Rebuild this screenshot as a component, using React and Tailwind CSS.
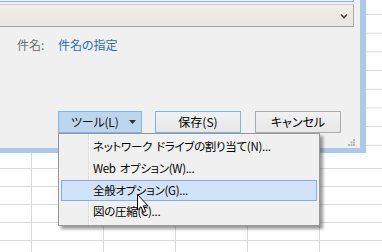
export default function App() {
  return (
    <div className="relative w-[382px] h-[252px] overflow-hidden bg-white text-[12px] leading-none text-black font-['Noto_Sans_CJK_JP',sans-serif] [font-feature-settings:'palt']">
      <div className="flex h-[153px]">
        <div className="w-[366px] h-full bg-[#abc9eb] pr-[6px] pb-[5px]">
          <div className="relative h-full bg-[#f0f0f0] flex flex-col">
            <div className="h-[2px] w-[354px] border-b border-r border-[#86b6e6]" />
            <div className="mt-[2px] h-[23px] w-[354px] border-t border-r border-b border-t-[#d6cdcb] border-r-[#acacac] border-b-[#a3a3a3] bg-[linear-gradient(#f2ede8,#e6e6e6)] flex items-center justify-end pr-[5px]">
              <svg width="8" height="6" viewBox="0 0 8 6">
                <path d="M1 1.5 L4 4.5 L7 1.5" fill="none" stroke="#444" strokeWidth="1.6" />
              </svg>
            </div>
            <div className="mt-[11px] flex items-center h-[14px] pl-[17px]">
              <span className="w-[41px] text-[#6d6d6d]">件名:</span>
              <span className="text-[#2a6cb9]">件名の指定</span>
            </div>
            <div className="mt-[59px] flex pl-[58px] h-[22px] whitespace-nowrap">
              <div className="w-[84px] h-[22px] border border-[#7eb4ea] bg-[#bcd6f0] flex items-center pl-[12px]">
                <span className="text-[#111] tracking-[-0.2px]">ツール(L)</span>
                <svg className="ml-auto mr-[5px]" width="7" height="4" viewBox="0 0 7 4">
                  <path d="M0 0 L7 0 L3.5 4 Z" fill="#333" />
                </svg>
              </div>
              <div className="ml-[13px] w-[86px] h-[22px] border border-[#7eb4ea] bg-[linear-gradient(#f2f2f2,#e6e6e6)] flex items-center justify-center">
                保存(S)
              </div>
              <div className="ml-[14px] w-[86px] h-[22px] border border-[#acacac] bg-[linear-gradient(#f2f2f2,#e6e6e6)] flex items-center justify-center">
                キャンセル
              </div>
            </div>
            <div className="flex justify-end pr-[5px] mt-[6px]">
              <svg width="7" height="7" viewBox="0 0 7 7">
                <rect x="5" y="0" width="2" height="2" fill="#b8b8b8" />
                <rect x="2.5" y="2.5" width="2" height="2" fill="#b8b8b8" />
                <rect x="5" y="2.5" width="2" height="2" fill="#b8b8b8" />
                <rect x="0" y="5" width="2" height="2" fill="#b8b8b8" />
                <rect x="2.5" y="5" width="2" height="2" fill="#b8b8b8" />
                <rect x="5" y="5" width="2" height="2" fill="#b8b8b8" />
              </svg>
            </div>
          </div>
        </div>
        <div className="flex-1 bg-[linear-gradient(#d9d9d9_1px,transparent_1px)] bg-[size:100%_18.7px] bg-[position:0_14px]" />
      </div>
      <div className="h-[99px] bg-[linear-gradient(#d9d9d9_1px,transparent_1px),linear-gradient(90deg,#d9d9d9_1px,transparent_1px)] bg-[size:72px_18px] bg-[position:31px_15px]" />

      <div className="absolute left-[58px] top-[133px] w-[262px] h-[93px] border border-[#979797] bg-[#f0f0f0] shadow-[3px_3px_3px_rgba(0,0,0,0.4)] p-[2px] flex flex-col text-[11.5px] tracking-[-0.3px] whitespace-nowrap">
        <div className="absolute left-[29px] top-0 bottom-0 w-[2px] border-l border-[#e0e0e0] border-r border-r-white" />
        <div className="relative h-[22px] flex items-center pl-[32px]">
          <span>ネットワーク</span>
          <span className="ml-[4px]">ドライブの割り当て(N)...</span>
        </div>
        <div className="relative h-[22px] flex items-center pl-[32px]">
          <span>Web</span>
          <span className="ml-[4px]">オプション(W)...</span>
        </div>
        <div className="relative h-[22px] flex items-center pl-[31px] border border-[#84acdd] bg-[#d1e3f6]">全般オプション(G)...</div>
        <div className="relative h-[22px] flex items-center pl-[32px]">図の圧縮(C)...</div>
      </div>

      <svg className="absolute left-[137px] top-[194px]" width="13" height="20" viewBox="0 0 13 20">
        <path d="M0.5 0.5 L0.5 16 L4 12.7 L6.5 18.5 L8.7 17.5 L6.3 11.8 L11 11.8 Z" fill="white" stroke="black" strokeWidth="1" strokeLinejoin="miter" />
      </svg>
    </div>
  );
}
